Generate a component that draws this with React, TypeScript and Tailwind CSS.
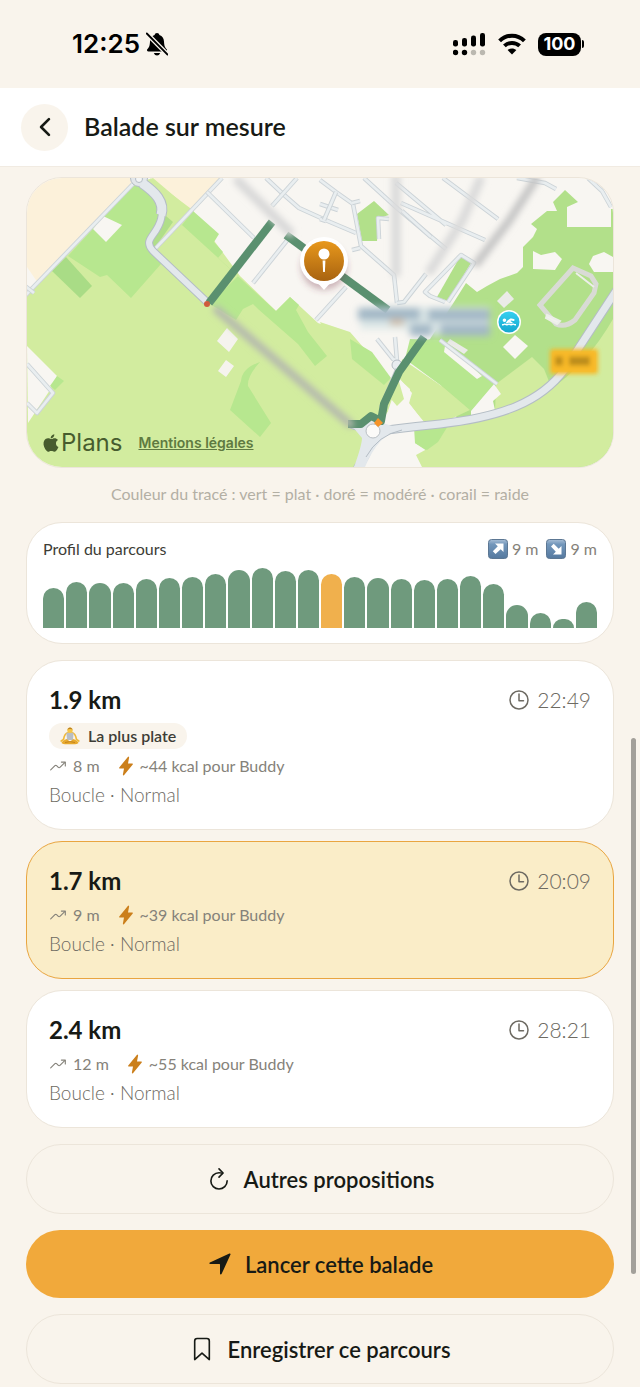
import { useState } from 'react';
import { FaSwimmer } from 'react-icons/fa';
import {
  IoBookmarkOutline,
  IoChevronBack,
  IoFlash,
  IoLogoApple,
  IoNavigate,
  IoRefreshOutline,
  IoTimeOutline,
  IoTrendingUpOutline,
} from 'react-icons/io5';

interface Walk {
  id: string;
  distance: string;
  duration: string;
  climb: string;
  kcal: string;
  kind: string;
  badge?: string;
}

const WALKS: Walk[] = [
  { id: 'a', distance: '1.9 km', duration: '22:49', climb: '8 m', kcal: '~44 kcal pour Buddy', kind: 'Boucle · Normal', badge: 'La plus plate' },
  { id: 'b', distance: '1.7 km', duration: '20:09', climb: '9 m', kcal: '~39 kcal pour Buddy', kind: 'Boucle · Normal' },
  { id: 'c', distance: '2.4 km', duration: '28:21', climb: '12 m', kcal: '~55 kcal pour Buddy', kind: 'Boucle · Normal' },
];

const PROFILE = [40, 46, 45, 45, 49, 50, 51, 54, 58, 60, 57, 58, 54, 51, 50, 49, 48, 49, 52, 44, 23, 15, 9, 26];
const STEEP_INDEX = 12;

function StatusBar() {
  return (
    <div className="flex h-[88px] items-center justify-between pr-14 pl-[72px] font-['Inter',sans-serif] text-black">
      <div className="flex items-center gap-1.5">
        <span className="text-[26px] leading-8 font-semibold">12:25</span>
        <svg className="h-6 w-[22px]" viewBox="0 0 22 24" aria-label="Silencieux">
          <path d="M11 1C12.300 1 13.200 1.900 13.400 3C16.500 4 17.800 6.500 18 9.500C18.200 14 19 15.500 20.800 17.300Q21.500 19.500 19.500 19.500H2.500Q0.500 19.500 1.200 17.300C3 15.500 3.800 14 4 9.500C4.200 6.500 5.500 4 8.600 3C8.800 1.900 9.700 1 11 1z" />
          <path d="M7.800 21H14.200Q13.200 23.500 11 23.500T7.800 21z" />
          <path d="M0.800 1.500L21.500 22.500" stroke="#f9f4ec" strokeWidth="4.500" />
          <path d="M0.800 1.500L21.500 22.500" stroke="#000" strokeWidth="1.800" strokeLinecap="round" />
        </svg>
      </div>
      <div className="flex items-center gap-3">
        <svg className="h-[23px] w-[33px]" viewBox="0 0 33 23" aria-label="Réseau">
          <rect x="0" y="7" width="5" height="6.500" rx="2.200" />
          <rect x="9" y="5" width="5" height="8.500" rx="2.200" />
          <rect x="18" y="2.500" width="5" height="11" rx="2.200" />
          <rect x="27" y="0" width="5" height="13.500" rx="2.200" />
          <circle cx="2.500" cy="19.500" r="2.700" />
          <circle cx="11.500" cy="19.500" r="2.700" />
          <circle cx="20.500" cy="19.500" r="2.700" fill="#bbb8b0" />
          <circle cx="29.500" cy="19.500" r="2.700" fill="#bbb8b0" />
        </svg>
        <svg className="h-[22px] w-7" viewBox="0 0 28 22" fill="none" stroke="#000" strokeWidth="4" aria-label="Wi-Fi">
          <path d="M1.6 7.8C8.5 1 19.5 1 26.4 7.8" />
          <path d="M6.4 12.9c4.3-4 10.9-4 15.2 0" />
          <path d="M14 21.6l-4.4-4.5c2.5-2.2 6.3-2.2 8.8 0z" fill="#000" stroke="none" />
        </svg>
        <div className="flex items-center gap-px">
          <span className="flex h-[23px] w-[43px] items-center justify-center rounded-[8px] bg-black text-lg leading-5 font-bold text-white">
            100
          </span>
          <span className="h-2 w-0.5 rounded-r-full bg-black" />
        </div>
      </div>
    </div>
  );
}

const STREETS = [
  'M133 185L20 302',
  'M222 179L154 251',
  'M207 193L254 239',
  'M266 179L283 195L299 209L330 223L356 234',
  'M297 179L272 207',
  'M289 239L253 284',
  'M346 288L316 321',
  'M320 205L338 211M320 220L326 222',
  'M320 181L336 193L353 205L361 247L394 276L397 304',
  'M336 193L324 221',
  'M360 202L352 204M360 249L352 251',
  'M364 179L398 210L446 250M396 184L446 226M443 179L498 220M401 204L485 241',
  'M402 212L431 238',
  'M517 179L545 184L556 190',
  'M588 179L602 192L611 208',
  'M379 240L378 219L389 220',
  'M426 275L404 303L397 304',
  'M445 303L430 297L425 293L461 256L474 264L448 303',
  'M377 340L393 360L397 362L395 338',
  'M440 341L497 385',
  'M27 365L53 394L37 414L27 404',
  'M20 283L34 294',
];

function WalkMap() {
  return (
    <svg
      className="block aspect-[586/289] w-full"
      viewBox="27 179 586 289"
      preserveAspectRatio="xMidYMid slice"
      role="img"
      aria-label="Carte du parcours"
    >
      <defs>
        <filter id="soft" x="-50%" y="-50%" width="200%" height="200%">
          <feGaussianBlur stdDeviation="3" />
        </filter>
        <filter id="label" x="-20%" y="-50%" width="140%" height="200%">
          <feGaussianBlur stdDeviation="3.600" />
        </filter>
        <filter id="badge" x="-20%" y="-50%" width="140%" height="200%">
          <feGaussianBlur stdDeviation="2" />
        </filter>
        <linearGradient id="pin" x1="0" y1="0" x2="0" y2="1">
          <stop offset="0" stopColor="#e8981c" />
          <stop offset="1" stopColor="#a86310" />
        </linearGradient>
        <linearGradient id="pool" x1="0" y1="0" x2="0" y2="1">
          <stop offset="0" stopColor="#35d0f0" />
          <stop offset="1" stopColor="#16a7cf" />
        </linearGradient>
      </defs>
      <rect x="27" y="179" width="586" height="289" fill="#f8f6f2" />

      {/* fields and parks */}
      <path d="M27 179H132L133 185L38 284L27 268z" fill="#fcf1da" />
      <path d="M152 179H222L193 213z" fill="#fcf1da" />
      <path d="M27 295L133 185L153 179L193 213L240 277L276 312L290 298L318 324L340 332L356 345L405 395L386 415L360 468H27z" fill="#d2ec9f" />
      <path d="M132 187L151 185L166 207L160 223L147 240L154 252L161 265L131 299L107 276L100 278L68 257z" fill="#b7e78f" />
      <path d="M150 179L194 212L181 226L164 217L166 202z" fill="#d2ec9f" />
      <path d="M166 217L173 223L154 250L148 238z" fill="#b0de8a" />
      <path d="M193 212L219 235L214 243L223 253L218 259L276 312L290 298L299 306L296 311L308 333L327 357L315 367L298 345L258 310L253 305L243 310L236 321L210 305L238 277L182 226z" fill="#b7e78f" />
      <path d="M103 217L122 226L106 243L93 230z" fill="#f8f6f2" />
      <path d="M66 258L92 287L80 299L52 272z" fill="#a9dc86" />
      <path d="M27 347L57 377L50 391L28 424z" fill="#f8f6f2" />
      <path d="M57 377L64 382L55 391L50 387z" fill="#b7e78f" />
      <path d="M227 329L238 340L229 353L217 342zM226 361L234 367L226 378L218 372z" fill="#f5f3ee" />
      <path d="M260 363Q242 369 241 382L230 411L260 438L271 424L248 387Q247 377 260 363z" fill="#b7e78f" />
      <path d="M320 323L350 333L390 379L405 395L397 407L360 372L345 356L330 349z" fill="#d2ec9f" />
      <path d="M350 340L372 353L391 379L384 386L352 360z" fill="#b7e78f" />
      <path d="M357 215L374 202L389 216L379 219L377 242L362 242z" fill="#b2e08a" />
      <path d="M461 256L471 264L448 302L437 298z" fill="#b2e08a" />
      <path d="M565 191L578 203L567 208V228H613V468H480L422 345L430 340L454 303L466 284L477 293L487 287L500 280L517 274L523 268V248L533 238L537 230L531 225L547 212L557 212L553 203z" fill="#b2e08a" />
      <path d="M611 210H613V230H611z" fill="#b2e08a" />
      <path d="M533 252L541 256L555 253L562 260L555 271L533 270zM593 257L604 253L613 258V273L594 273L589 265z" fill="#f8f6f2" />
      <path d="M410 340L440 341L447 349L494 385L471 412L443 388L405 360z" fill="#b7e78f" />
      <path d="M402 360L443 388L470 411L440 425L425 424L409 405L410 390L399 380z" fill="#d2ec9f" />
      <path d="M496 385L532 358L544 370L552 390L520 409L495 414z" fill="#d2ec9f" />
      <path d="M471 412L494 385L501 395L493 402L496 416L471 420z" fill="#f8f6f2" />
      <path d="M445 347L455 353L482 377L477 380L444 353z" fill="#f8f6f2" />
      <path d="M450 340L468 351L464 355L447 344z" fill="#ebebe7" />
      <path d="M399 379L412 394L409 404L425 425L445 423L445 468H360L387 415z" fill="#f8f6f2" />
      <path d="M398 379L404 400L397 407L391 400z" fill="#d2ec9f" />
      <path d="M414 428L451 422L438 440L427 452L415 444z" fill="#b7e78f" />
      <path d="M451 422Q510 417 548 392T613 320V468H422L416 456L427 450z" fill="#d2ec9f" />
      <path d="M415 428L451 422L438 443L427 451L415 444z" fill="#b7e78f" />
      <path d="M515 336L528 347L515 360L503 348z" fill="#f8f6f2" />
      <path d="M507 292L514 300L504 309L497 302z" fill="#ebebe7" />

      {/* stadium */}
      <path d="M540 306L573 269L591 277L596 285L594 294L575 321Q565 329 556 325z" fill="none" stroke="#d9dbd5" strokeWidth="5" />
      <path d="M547 316L560 322L557 325L546 319zM576 274L594 288" fill="#f1f1ee" stroke="#eceee9" strokeWidth="2" />

      {/* streets */}
      {STREETS.map((d) => (
        <g key={d} fill="none" strokeLinejoin="round">
          <path d={d} stroke="#ccd3d7" strokeWidth="4.500" />
          <path d={d} stroke="#e9eef0" strokeWidth="2.700" />
        </g>
      ))}

      {/* main roads */}
      <g fill="none" stroke="#b4bdc5">
        <path d="M142 184C155 193 165 203 161 220S142 240 153 252L208 304" strokeWidth="8" />
        <path d="M142 184C155 193 165 203 161 216" strokeWidth="11" />
        <path d="M373 433Q400 429 440 425C500 418 540 404 565 370L620 286" strokeWidth="9" />
        <path d="M351 425L373 433L380 432M373 432Q371 450 357 470" strokeWidth="9" />
      </g>
      <circle cx="139" cy="179" r="8.500" fill="#e3e7ea" stroke="#b4bdc5" />
      <g fill="none" stroke="#e3e8ec">
        <path d="M142 184C155 193 165 203 161 220S142 240 153 252L208 304" strokeWidth="6" />
        <path d="M142 184C155 193 165 203 161 216" strokeWidth="9" />
        <path d="M373 433Q400 429 440 425C500 418 540 404 565 370L620 286" strokeWidth="7" />
        <path d="M351 425L373 433L380 432M373 432Q371 450 357 470" strokeWidth="7" />
      </g>
      <path d="M352 427Q366 420 374 421Q382 424 402 430Q379 434 365 468H354Q362 446 362 439z" fill="#e3e8ec" />
      <path d="M402 431Q378 436 366 458" fill="none" stroke="#b4bdc5" />
      <circle cx="139" cy="180" r="3.500" fill="#f4f5f5" stroke="#b4bdc5" />
      <circle cx="397" cy="366" r="5" fill="#e9edf0" stroke="#b4bdc5" />
      <path d="M397 370L381 408" stroke="#c3cacf" strokeWidth="4" />
      <circle cx="373" cy="432" r="7" fill="#fbfaf8" stroke="#b9bfc4" />

      {/* planned route */}
      <g fill="none" stroke="#5a906f" strokeWidth="8" strokeLinejoin="round">
        <path d="M272 223L209 304" />
        <path d="M286 236L388 311" />
        <path d="M424 338L399 373L384 405L381 422L371 417L361 425L348 425" />
      </g>
      <circle cx="207" cy="305" r="3" fill="#cf5b3c" />
      <path d="M378 419L383 424L378 428L374 424z" fill="#f5942a" />

      <g fill="none" filter="url(#soft)" strokeLinecap="round">
        <path d="M238 182L290 233" stroke="#d8d8d8" strokeWidth="9" />
        <path d="M217 311L350 425" stroke="#b5b9ae" strokeWidth="8" />
        <path d="M396 178V274" stroke="#dadada" strokeWidth="9" />
        <path d="M480 181L462 222L430 272" stroke="#dadada" strokeWidth="9" />
        <path d="M536 180L509 222L477 264" stroke="#c4c4c4" strokeWidth="8" />
      </g>
      <g filter="url(#label)">
        <path d="M363 308H490V336H414L405 330H360z" fill="#dce7e7" />
        <path d="M358 315H420M428 316H490M410 331H432M440 331H490" stroke="#a3b8c6" strokeWidth="12" fill="none" />
        <path d="M390 323H404" stroke="#d2bca4" strokeWidth="6" />
      </g>

      <circle cx="509" cy="323" r="12" fill="#fff" />
      <circle cx="509" cy="323" r="10.500" fill="url(#pool)" />
      <FaSwimmer x={502} y={316} size={14} color="#fff" />

      <g filter="url(#badge)">
        <rect x="550" y="350" width="48" height="25" rx="3" fill="#f8b928" />
        <path d="M555 362H563M569 362H590" stroke="#9b7415" strokeWidth="9" />
      </g>
      <rect x="552" y="352" width="44" height="21" rx="3" fill="#f9bb2b" fillOpacity="0.350" />

      {/* start pin */}
      <circle cx="324" cy="268" r="23" fill="#7a4050" fillOpacity="0.350" filter="url(#soft)" />
      <path d="M316 282L324 291L332 282z" fill="#fff" />
      <circle cx="324" cy="262" r="24" fill="#fff" />
      <circle cx="324" cy="262" r="20" fill="url(#pin)" />
      <circle cx="324" cy="255" r="5.500" fill="#fff" />
      <path d="M322.600 261.500H325.400L324.900 273H323.100z" fill="#fff" />
    </svg>
  );
}

function SlopeTile({ down = false }: { down?: boolean }) {
  return (
    <svg className="size-5" viewBox="0 0 20 20" aria-hidden="true">
      <defs>
        <linearGradient id="tile" x1="0" y1="0" x2="0" y2="1">
          <stop offset="0" stopColor="#a9bfd6" />
          <stop offset="0.250" stopColor="#7397bb" />
          <stop offset="1" stopColor="#55799f" />
        </linearGradient>
      </defs>
      <rect x="0.500" y="0.500" width="19" height="19" rx="3" fill="url(#tile)" stroke="#5c7793" />
      <g transform={down ? 'rotate(90 10 10)' : undefined}>
        <path d="M7 4.500H15.500V13L12.700 10.200L7.500 15L4.800 12.300L9.800 7.300z" fill="#fff" />
      </g>
    </svg>
  );
}

function YogaIcon() {
  return (
    <svg className="h-[18px] w-5" viewBox="0 0 20 18" aria-hidden="true">
      <path d="M8.500 5.500Q4.500 6 3.500 12.500L1.200 14" fill="none" stroke="#f0b93a" strokeWidth="1.700" strokeLinecap="round" />
      <path d="M11.500 5.500Q15.500 6 16.500 12.500L18.800 14" fill="none" stroke="#f0b93a" strokeWidth="1.700" strokeLinecap="round" />
      <path d="M6.500 6Q10 4.500 13.500 6L13 13H7z" fill="#b9bec4" />
      <path d="M6.500 12Q2 14 1.500 16Q3 17.800 10 17.200Q17 17.800 18.500 16Q18 14 13.500 12L10 14.500z" fill="#e8a92c" />
      <path d="M5 15.500L10 14.600L15 15.500" fill="none" stroke="#b97a18" strokeWidth="0.800" />
      <circle cx="10" cy="3.200" r="2.700" fill="#f7c545" />
      <path d="M7.300 2.600Q10-1.500 12.700 2.600Q10 1.300 7.300 2.600z" fill="#b98127" />
    </svg>
  );
}

function ProfileCard() {
  return (
    <section className="mt-4 rounded-[36px] border border-[#ece5da] bg-white px-4 pt-3.5 pb-[15px]">
      <div className="flex h-6 items-center justify-between text-base">
        <h2 className="text-[#3d3d36]">Profil du parcours</h2>
        <div className="flex items-center gap-2 text-[#85827a]">
          <span className="flex items-center gap-1">
            <SlopeTile />9 m
          </span>
          <span className="flex items-center gap-1">
            <SlopeTile down />9 m
          </span>
        </div>
      </div>
      <div className="mt-[7px] flex h-15 items-end gap-0.5">
        {PROFILE.map((height, i) => (
          <div
            key={i}
            className={`flex-1 rounded-t-full ${i === STEEP_INDEX ? 'bg-[#f0b04d]' : 'bg-[#6f9a7d]'}`}
            style={{ height }}
          />
        ))}
      </div>
    </section>
  );
}

function WalkCard({ walk, selected, onSelect }: { walk: Walk; selected: boolean; onSelect: () => void }) {
  return (
    <button
      type="button"
      aria-pressed={selected}
      onClick={onSelect}
      className={`flex w-full flex-col gap-1 rounded-[36px] border px-[22px] py-[22px] text-left text-[#85827a] ${
        selected ? 'border-[#e9a540] bg-[#faedc8]' : 'border-[#ece5da] bg-white'
      }`}
    >
      <span className="flex h-[34px] w-full items-center justify-between">
        <span className="text-2xl font-bold text-[#171a15]">{walk.distance}</span>
        <span className="flex items-center gap-1.5 text-[21px] font-light text-[#6d6a62]">
          <IoTimeOutline className="size-6" />
          {walk.duration}
        </span>
      </span>
      {walk.badge && (
        <span className="flex h-7 items-end">
          <span className="flex h-[26px] items-center gap-2 rounded-full bg-[#f9f4ec] px-[11px] text-base font-semibold text-[#3d3d36]">
            <YogaIcon />
            {walk.badge}
          </span>
        </span>
      )}
      <span className="flex h-[26px] items-center gap-4 text-base">
        <span className="flex items-center gap-1.5">
          <IoTrendingUpOutline className="size-[18px]" />
          {walk.climb}
        </span>
        <span className="flex items-center gap-1">
          <IoFlash className="size-5 text-[#cb7f1b]" />
          {walk.kcal}
        </span>
      </span>
      <span className="text-[19px] leading-6 font-light text-[#6d6a62]">{walk.kind}</span>
    </button>
  );
}

export default function App() {
  const [selectedId, setSelectedId] = useState('b');

  return (
    <div className="relative min-h-screen bg-[#f9f4ec] font-['Lato',sans-serif] text-[#171a15]">
      <StatusBar />
      <header className="flex h-[79px] items-center gap-4 border-b border-[#f1ebe2] bg-white px-[21px]">
        <button
          type="button"
          aria-label="Retour"
          className="flex size-[47px] items-center justify-center rounded-full bg-[#f9f4ec]"
        >
          <IoChevronBack className="size-7" />
        </button>
        <h1 className="text-[25px] font-semibold">Balade sur mesure</h1>
      </header>

      <main className="px-[26px] pt-2.5 pb-0.5">
        <div className="relative overflow-hidden rounded-[36px] border border-[#ece5da]">
          <WalkMap />
          <div className="absolute bottom-2.5 left-3.5 flex items-center gap-4 font-['Inter',sans-serif]">
            <span className="flex items-center text-2xl leading-7 text-[#475c2e]">
              <IoLogoApple className="size-5" />
              Plans
            </span>
            <a href="#" className="text-sm font-semibold text-[#5f7a41] underline">
              Mentions légales
            </a>
          </div>
        </div>

        <p className="mt-3.5 text-center text-base leading-6 text-[#b3afa4]">
          Couleur du tracé : vert = plat · doré = modéré · corail = raide
        </p>

        <ProfileCard />

        <div className="mt-4 flex flex-col gap-[11px]">
          {WALKS.map((walk) => (
            <WalkCard
              key={walk.id}
              walk={walk}
              selected={walk.id === selectedId}
              onSelect={() => setSelectedId(walk.id)}
            />
          ))}
        </div>

        <div className="mt-4 flex flex-col gap-4 text-[22px] font-semibold">
          <button type="button" className="flex h-[70px] items-center justify-center gap-3 rounded-full border border-[#ece5da]">
            <IoRefreshOutline className="size-[26px]" />
            Autres propositions
          </button>
          <button type="button" className="flex h-[68px] items-center justify-center gap-3 rounded-full bg-[#f1a93b]">
            <IoNavigate className="size-[26px]" />
            Lancer cette balade
          </button>
          <button type="button" className="flex h-[70px] items-center justify-center gap-3 rounded-full border border-[#ece5da]">
            <IoBookmarkOutline className="size-[26px]" />
            Enregistrer ce parcours
          </button>
        </div>
      </main>

      {/* scroll indicator */}
      <div className="absolute top-[738px] right-1 h-[536px] w-[5px] rounded-full bg-[#a3a09a]" />
    </div>
  );
}
